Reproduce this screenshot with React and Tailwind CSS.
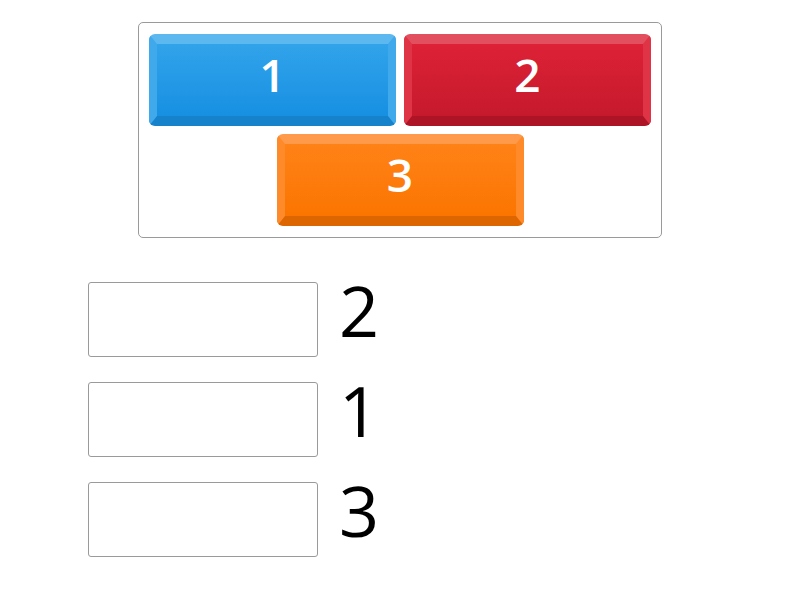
const tiles = [
  {
    label: "1",
    border: "border-t-[#5cb8ef] border-x-[#40a9eb] border-b-[#1582cb]",
    face: "bg-gradient-to-b from-[#30a3ea] to-[#1790e2]",
  },
  {
    label: "2",
    border: "border-t-[#e2505f] border-x-[#df3346] border-b-[#ad1526]",
    face: "bg-gradient-to-b from-[#dd2136] to-[#c61a2c]",
  },
  {
    label: "3",
    border: "border-t-[#ff9a4a] border-x-[#ff8a2a] border-b-[#dd6600]",
    face: "bg-gradient-to-b from-[#ff8216] to-[#fb7500]",
  },
];

const answers = ["2", "1", "3"];

function Tile({ tile }) {
  return (
    <div
      className={`w-[247px] h-[92px] rounded-[6px] border-x-[8px] border-t-[10px] border-b-[10px] border-solid ${tile.border}`}
    >
      <div
        className={`h-full flex items-center justify-center pb-[12px] ${tile.face} text-white text-[46px] font-semibold leading-none`}
      >
        {tile.label}
      </div>
    </div>
  );
}

export default function App() {
  return (
    <div
      className="w-[800px] h-[600px] bg-white overflow-hidden"
      style={{ fontFamily: '"Open Sans", sans-serif' }}
    >
      {/* tiles to drag */}
      <div className="mx-auto mt-[22px] w-[524px] h-[216px] border border-[#9a9a9a] rounded-[5px] pt-[11px] px-[10px] flex flex-col items-center gap-[8px]">
        <div className="flex gap-[8px]">
          <Tile tile={tiles[0]} />
          <Tile tile={tiles[1]} />
        </div>
        <Tile tile={tiles[2]} />
      </div>

      {/* drop slots */}
      <div className="mt-[44px] ml-[88px] flex flex-col gap-[25px]">
        {answers.map((a, i) => (
          <div key={i} className="flex items-start">
            <div className="w-[230px] h-[75px] border border-[#9a9a9a] rounded-[3px] bg-white" />
            <span className="ml-[21px] -mt-[7px] text-[70px] leading-none text-black">
              {a}
            </span>
          </div>
        ))}
      </div>
    </div>
  );
}
